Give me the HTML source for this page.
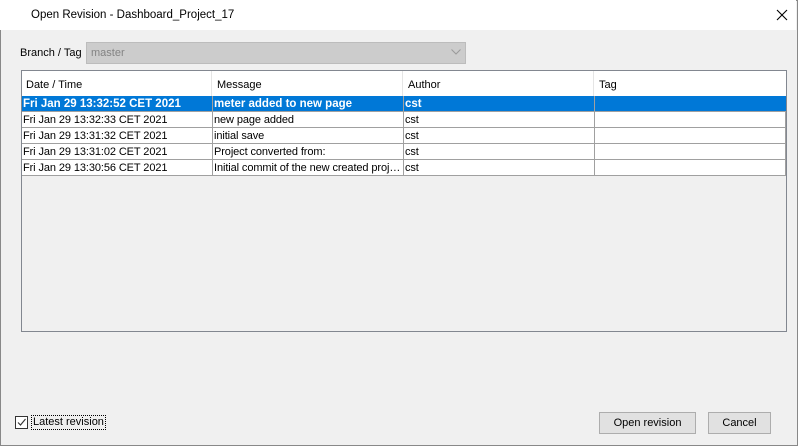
<!DOCTYPE html>
<html><head><meta charset="utf-8"><style>
*{margin:0;padding:0;box-sizing:border-box}
body{width:798px;height:446px;overflow:hidden;background:#f0f0f0;font-family:"Liberation Sans",sans-serif;font-size:11px;color:#000;position:relative}
.win{position:absolute;left:0;top:0;width:798px;height:446px;border:1px solid #888;}
.title{position:absolute;left:0;top:0;width:796px;height:30px;background:#fff}
.abs{position:absolute;white-space:nowrap}
.cell{position:absolute;height:16px;line-height:16px;padding-left:1px;white-space:nowrap;overflow:hidden;text-overflow:ellipsis;border-right:1px solid #a0a0a0;border-bottom:1px solid #a0a0a0;background:#fff;letter-spacing:-0.1px}
.sel{background:#0078d7;color:#fff;font-weight:bold;letter-spacing:0;font-size:11.5px}
.btn{position:absolute;background:#e1e1e1;border:1px solid #adadad;text-align:center;line-height:20px}
</style></head><body>
<div class="win"></div>
<div class="title"></div>
<div class="abs" style="left:31px;top:9px;font-size:11.5px">Open Revision - Dashboard_Project_17</div>
<svg class="abs" style="left:776px;top:9px" width="12" height="12"><path d="M1 1L11 11M11 1L1 11" stroke="#000" stroke-width="1.1"/></svg>
<div class="abs" style="left:20px;top:47px">Branch / Tag</div>
<div class="abs" style="left:86px;top:42px;width:380px;height:22px;background:#cccccc;border:1px solid #bcbcbc;color:#838383;padding-left:4px;line-height:21px">master</div>
<svg class="abs" style="left:451px;top:49px" width="10" height="6"><path d="M0.5 0.5L5 5L9.5 0.5" stroke="#9a9a9a" fill="none"/></svg>
<div class="abs" style="left:21px;top:70px;width:766px;height:262px;border:1px solid #828790;background:#f0f0f0"></div>
<div class="abs" style="left:22px;top:71px;width:764px;height:25px;background:#fff"></div>
<div class="abs" style="left:211px;top:71px;width:1px;height:25px;background:#e5e5e5"></div>
<div class="abs" style="left:402px;top:71px;width:1px;height:25px;background:#e5e5e5"></div>
<div class="abs" style="left:593px;top:71px;width:1px;height:25px;background:#e5e5e5"></div>
<div class="abs" style="left:26px;top:79px">Date / Time</div>
<div class="abs" style="left:217px;top:79px">Message</div>
<div class="abs" style="left:408px;top:79px">Author</div>
<div class="abs" style="left:599px;top:79px">Tag</div>

<div class="cell sel" style="left:22px;top:96px;width:191px">Fri Jan 29 13:32:52 CET 2021</div>
<div class="cell sel" style="left:213px;top:96px;width:191px">meter added to new page</div>
<div class="cell sel" style="left:404px;top:96px;width:191px">cst</div>
<div class="cell sel" style="left:595px;top:96px;width:191px;border-right:none"></div>

<div class="cell" style="left:22px;top:112px;width:191px">Fri Jan 29 13:32:33 CET 2021</div>
<div class="cell" style="left:213px;top:112px;width:191px">new page added</div>
<div class="cell" style="left:404px;top:112px;width:191px">cst</div>
<div class="cell" style="left:595px;top:112px;width:191px"></div>

<div class="cell" style="left:22px;top:128px;width:191px">Fri Jan 29 13:31:32 CET 2021</div>
<div class="cell" style="left:213px;top:128px;width:191px">initial save</div>
<div class="cell" style="left:404px;top:128px;width:191px">cst</div>
<div class="cell" style="left:595px;top:128px;width:191px"></div>

<div class="cell" style="left:22px;top:144px;width:191px">Fri Jan 29 13:31:02 CET 2021</div>
<div class="cell" style="left:213px;top:144px;width:191px">Project converted from:</div>
<div class="cell" style="left:404px;top:144px;width:191px">cst</div>
<div class="cell" style="left:595px;top:144px;width:191px"></div>

<div class="cell" style="left:22px;top:160px;width:191px">Fri Jan 29 13:30:56 CET 2021</div>
<div class="cell" style="left:213px;top:160px;width:191px">Initial commit of the new created project</div>
<div class="cell" style="left:404px;top:160px;width:191px">cst</div>
<div class="cell" style="left:595px;top:160px;width:191px"></div>

<div class="abs" style="left:15px;top:416px;width:13px;height:13px;border:1px solid #333;background:#fff"></div>
<svg class="abs" style="left:16px;top:417px" width="11" height="11"><path d="M2 5.5L4.5 8L9.5 2" stroke="#333" fill="none" stroke-width="1.1"/></svg>
<div class="abs" style="left:31px;top:415px;border:1px dotted #000;padding:0 1px;line-height:13px">Latest revision</div>
<div class="btn" style="left:599px;top:412px;width:97px;height:22px">Open revision</div>
<div class="btn" style="left:708px;top:412px;width:63px;height:22px">Cancel</div>
</body></html>
